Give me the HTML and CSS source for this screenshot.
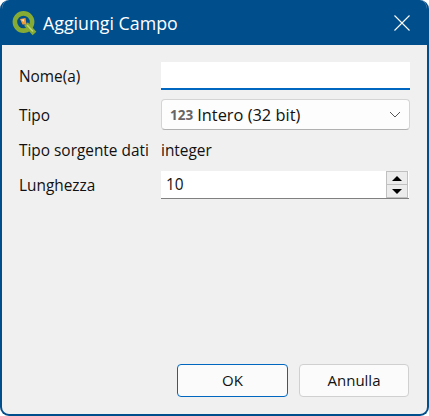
FILE: index.html
```html
<!DOCTYPE html>
<html lang="it">
<head>
    <meta charset="UTF-8">
    <title>Aggiungi Campo</title>
    <link rel="stylesheet" href="styles.css">
</head>
<body>
  <div class="dialog">
    <div class="titlebar">
      <svg class="logo" width="26" height="26" viewBox="0 0 26 26">
        <circle cx="12.5" cy="12" r="8.6" fill="none" stroke="#86ab35" stroke-width="4.6"/>
        <path d="M15 14 L23.5 23.5" stroke="#86ab35" stroke-width="5" fill="none"/>
        <path d="M16 15 L22 21.5" stroke="#bcd67c" stroke-width="1.4" fill="none"/>
        <path d="M9 9 L14.5 8 L15.5 14.5 L11.5 14.5 Z" fill="#ee9a3a"/>
        <path d="M10 9.8 L13 9.2 L13 12 Z" fill="#f9dfba"/>
      </svg>
      <span class="title">Aggiungi Campo</span>
      <svg class="close" width="16" height="16" viewBox="0 0 16 16">
        <path d="M0.5 0.5 L15.5 15.5 M15.5 0.5 L0.5 15.5" stroke="#ffffff" stroke-width="1.1" fill="none"/>
      </svg>
    </div>

    <div class="content">
      <div class="form">
        <label class="row-name">Nome(a)</label>
        <div class="name-input"></div>

        <label class="row-type">Tipo</label>
        <div class="combo">
          <span class="type-icon">123</span>
          <span class="type-text">Intero (32 bit)</span>
          <svg class="chevron" width="12" height="7" viewBox="0 0 12 7">
            <path d="M1 1 L6 6 L11 1" stroke="#555555" stroke-width="1" fill="none"/>
          </svg>
        </div>

        <label class="row-source">Tipo sorgente dati</label>
        <div class="source-value">integer</div>

        <label class="row-length">Lunghezza</label>
        <div class="spin">
          <span class="spin-value">10</span>
          <div class="spin-buttons">
            <div class="spin-btn"><span class="arrow-up"></span></div>
            <div class="spin-btn"><span class="arrow-down"></span></div>
          </div>
        </div>
      </div>

      <div class="buttons">
        <button class="btn btn-default">OK</button>
        <button class="btn">Annulla</button>
      </div>
    </div>
  </div>
</body>
</html>
```

FILE: styles.css
```css
html, body {
    margin: 0;
    padding: 0;
    background-color: #ffffff;
}

body {
    font-family: 'Open Sans', 'Noto Sans', sans-serif;
    font-size: 15.4px;
    color: #111111;
}

.dialog {
    width: 429px;
    height: 416px;
    box-sizing: border-box;
    display: flex;
    flex-direction: column;
    border: 2px solid #004e8c;
    border-top: none;
    border-radius: 9px;
    background-color: #f0f0f0;
    overflow: hidden;
}

/* Title bar */
.titlebar {
    height: 45px;
    flex-shrink: 0;
    display: flex;
    align-items: center;
    padding: 0 17px 0 9px;
    background-color: #004e8c;
    color: #ffffff;
}

.logo {
    margin-right: 6px;
}

.title {
    font-size: 17.8px;
    flex-grow: 1;
}

/* Form */
.content {
    flex-grow: 1;
    display: flex;
    flex-direction: column;
    justify-content: space-between;
    padding: 17px 18px 17px 17px;
}

.form {
    display: grid;
    grid-template-columns: 142px 249px;
    align-items: center;
}

.name-input {
    height: 28px;
    box-sizing: border-box;
    background-color: #ffffff;
    border-bottom: 2px solid #0067c0;
    margin-bottom: 9px;
}

.row-name {
    margin-bottom: 9px;
}

.row-type {
    padding-top: 1px;
}

.combo {
    height: 31px;
    box-sizing: border-box;
    display: flex;
    align-items: center;
    padding: 0 8px;
    background-color: #fdfdfd;
    border: 1px solid #d4d4d4;
    border-bottom-color: #b0b0b0;
    border-radius: 4px;
}

.type-icon {
    font-size: 13.5px;
    font-weight: 700;
    color: #666666;
    margin-right: 4px;
}

.type-text {
    font-size: 16.4px;
}

.chevron {
    margin-left: auto;
}

.source-value,
.row-source {
    height: 41px;
    line-height: 42px;
    white-space: nowrap;
}

.spin {
    width: 248px;
    height: 28px;
    box-sizing: border-box;
    display: flex;
    align-items: center;
    justify-content: space-between;
    padding-left: 5px;
    background-color: #ffffff;
    border-bottom: 1px solid #808080;
}

.spin-buttons {
    width: 22px;
    display: flex;
    flex-direction: column;
    margin-right: 1px;
}

.spin-btn {
    height: 12px;
    display: flex;
    align-items: center;
    justify-content: center;
    background-color: #ececec;
    border: 1px solid #c0c0c0;
}

.spin-btn + .spin-btn {
    border-top: none;
}

.arrow-up {
    border-left: 5px solid transparent;
    border-right: 5px solid transparent;
    border-bottom: 5px solid #000000;
}

.arrow-down {
    border-left: 5px solid transparent;
    border-right: 5px solid transparent;
    border-top: 5px solid #000000;
}

/* Buttons */
.buttons {
    display: flex;
    justify-content: flex-end;
    gap: 11px;
}

.btn {
    width: 110px;
    height: 33px;
    padding-bottom: 3px;
    font-family: inherit;
    font-size: 15px;
    color: #111111;
    background-color: #fbfbfb;
    border: 1px solid #d0d0d0;
    border-radius: 4px;
}

.btn-default {
    width: 111px;
    border-color: #0067c0;
}
```
